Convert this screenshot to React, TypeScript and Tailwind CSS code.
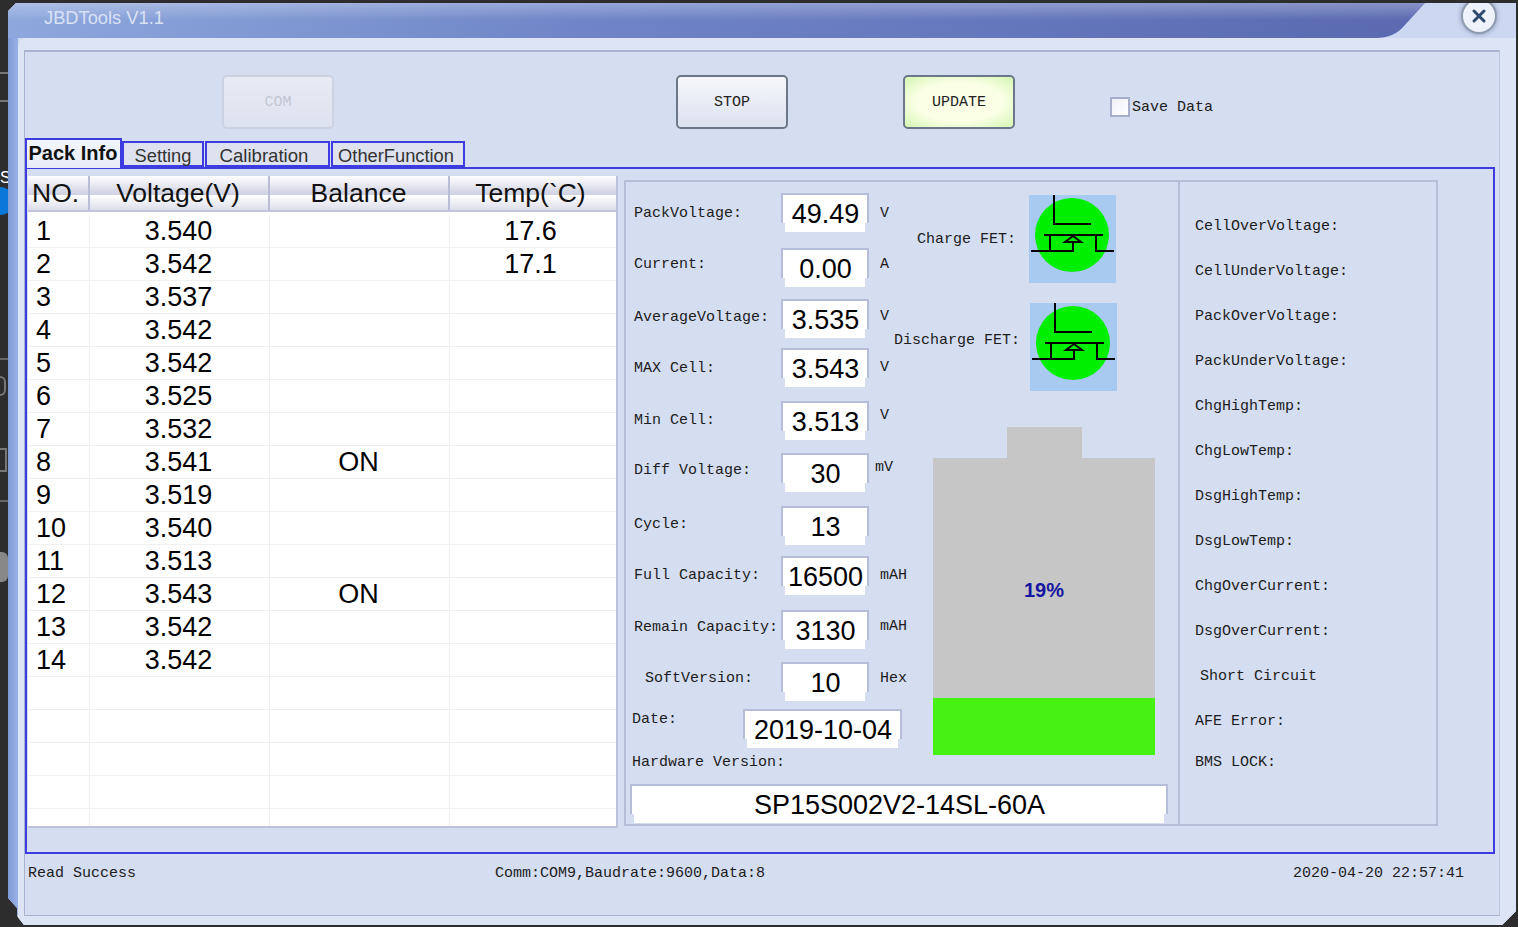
const cells = [
  { no: 1, v: "3.540", bal: "", temp: "17.6" },
  { no: 2, v: "3.542", bal: "", temp: "17.1" },
  { no: 3, v: "3.537", bal: "", temp: "" },
  { no: 4, v: "3.542", bal: "", temp: "" },
  { no: 5, v: "3.542", bal: "", temp: "" },
  { no: 6, v: "3.525", bal: "", temp: "" },
  { no: 7, v: "3.532", bal: "", temp: "" },
  { no: 8, v: "3.541", bal: "ON", temp: "" },
  { no: 9, v: "3.519", bal: "", temp: "" },
  { no: 10, v: "3.540", bal: "", temp: "" },
  { no: 11, v: "3.513", bal: "", temp: "" },
  { no: 12, v: "3.543", bal: "ON", temp: "" },
  { no: 13, v: "3.542", bal: "", temp: "" },
  { no: 14, v: "3.542", bal: "", temp: "" },
];

// the original dialog's controls sit on an uneven grid, so each row keeps its own offsets
const fields = [
  { label: "PackVoltage:", value: "49.49", unit: "V", row: "h-[55px]", labelCls: "pl-[8px] mt-[13px]", unitCls: "ml-[11px] mt-[13px]" },
  { label: "Current:", value: "0.00", unit: "A", row: "h-[51px]", labelCls: "pl-[8px] mt-[9px]", unitCls: "ml-[11px] mt-[9px]" },
  { label: "AverageVoltage:", value: "3.535", unit: "V", row: "h-[49px]", labelCls: "pl-[8px] mt-[11px]", unitCls: "ml-[11px] mt-[10px]" },
  { label: "MAX Cell:", value: "3.543", unit: "V", row: "h-[53px]", labelCls: "pl-[8px] mt-[13px]", unitCls: "ml-[11px] mt-[12px]" },
  { label: "Min Cell:", value: "3.513", unit: "V", row: "h-[52px]", labelCls: "pl-[8px] mt-[12px]", unitCls: "ml-[11px] mt-[7px]" },
  { label: "Diff Voltage:", value: "30", unit: "mV", row: "h-[53px]", labelCls: "pl-[8px] mt-[10px]", unitCls: "ml-[6px] mt-[7px]" },
  { label: "Cycle:", value: "13", unit: "", row: "h-[50px]", labelCls: "pl-[8px] mt-[11px]", unitCls: "" },
  { label: "Full Capacity:", value: "16500", unit: "mAH", row: "h-[54px]", labelCls: "pl-[8px] mt-[12px]", unitCls: "ml-[11px] mt-[12px]" },
  { label: "Remain Capacity:", value: "3130", unit: "mAH", row: "h-[52px]", labelCls: "pl-[8px] mt-[10px]", unitCls: "ml-[11px] mt-[9px]" },
  { label: "SoftVersion:", value: "10", unit: "Hex", row: "h-[47px]", labelCls: "pl-[19px] mt-[9px]", unitCls: "ml-[11px] mt-[9px]" },
];

const alarms = [
  "CellOverVoltage:",
  "CellUnderVoltage:",
  "PackOverVoltage:",
  "PackUnderVoltage:",
  "ChgHighTemp:",
  "ChgLowTemp:",
  "DsgHighTemp:",
  "DsgLowTemp:",
  "ChgOverCurrent:",
  "DsgOverCurrent:",
];

const mono = "font-['Liberation_Mono',monospace] text-[15px] leading-none text-[#1c1c1c] whitespace-pre";
const sans = "font-['Liberation_Sans',Arial,sans-serif] text-[27px] leading-none text-black";

function ValueBox({ value, className }: { value: string; className: string }) {
  return (
    <div className={`relative flex h-[39px] items-center justify-center ${className}`}>
      {/* frame is open at the bottom in the original skin */}
      <div className="absolute inset-x-0 top-0 h-[30px] border-x-2 border-t-2 border-[#b6bdd8] bg-white" />
      <div className="absolute inset-x-[4px] bottom-0 h-[12px] bg-white" />
      <span className={`relative mt-[4px] pl-[1px] ${sans}`}>{value}</span>
    </div>
  );
}

function FetIcon() {
  return (
    <svg width="87" height="88" viewBox="0 0 87 88" fill="none" className="shrink-0">
      <rect width="87" height="88" fill="#a8caf0" />
      <circle cx="43" cy="40" r="37" fill="#00ee00" />
      <g stroke="#000" strokeWidth="2">
        <path d="M25 0V29H62" />
        <path d="M15 40H74" />
        <path d="M21 40V56" />
        <path d="M2 56H44V47" />
        <path d="M44 41L36 47H52Z" />
        <path d="M67 40V56H85" />
      </g>
    </svg>
  );
}

function ActionButton({ label, className }: { label: string; className: string }) {
  return (
    <button className={`flex h-[54px] w-[112px] items-center justify-center rounded-[5px] border-2 font-['Liberation_Mono',monospace] text-[15px] leading-none ${className}`}>
      {label}
    </button>
  );
}

export default function App() {
  return (
    <div className="relative h-[927px] w-[1518px] overflow-hidden bg-[#2d2d2d] pl-[8px] pt-[3px]">
      {/* bits of the desktop behind the window */}
      <div className="absolute left-[-14px] top-[187px] h-[28px] w-[28px] rounded-full bg-[#0a78d8]" />
      <div className="absolute left-0 top-[170px] font-['Liberation_Sans',sans-serif] text-[16px] leading-none text-white">S</div>
      <div className="absolute left-0 top-[72px] h-[2px] w-[8px] bg-[#777]" />
      <div className="absolute left-0 top-[100px] h-[2px] w-[8px] bg-[#777]" />
      <div className="absolute left-0 top-[358px] h-[2px] w-[8px] bg-[#666]" />
      <div className="absolute left-0 top-[376px] h-[20px] w-[6px] rounded-r-full border-2 border-l-0 border-[#777]" />
      <div className="absolute left-0 top-[448px] h-[24px] w-[7px] border-2 border-l-0 border-[#777]" />
      <div className="absolute left-0 top-[500px] h-[2px] w-[8px] bg-[#666]" />
      <div className="absolute left-0 top-[552px] h-[30px] w-[8px] rounded-r-md bg-[#888]" />

      {/* window */}
      <div className="flex h-[922px] w-[1508px] flex-col bg-[#ccd7f1] [clip-path:polygon(0_8px,8px_0,100%_0,100%_calc(100%-14px),calc(100%-14px)_100%,16px_100%,9px_calc(100%-9px),9px_905px,0_895px)]">
        {/* title bar */}
        <div className="h-[35px] shrink-0">
          <div className="h-[35px] w-[1420px] bg-[linear-gradient(180deg,rgba(255,255,255,0.28),rgba(255,255,255,0)_50%),linear-gradient(90deg,#8ea8dd,#6f85c7_40%,#5a69b0)] pl-[36px] pt-[5px] font-['Liberation_Sans',Arial,sans-serif] text-[18.3px] leading-[20px] text-[#d9e1f5] [clip-path:path('M0_0H1417L1396_23Q1386_35_1368_35H0Z')]">
            JBDTools V1.1
          </div>
        </div>
        <div className="absolute left-[1461px] top-[-2px] flex h-[36px] w-[36px] items-center justify-center rounded-full border-2 border-[#8f9cb0] bg-[#eef2fa] shadow-[0_0_5px_rgba(90,100,140,0.55)]">
          <svg width="18" height="18" viewBox="0 0 18 18" fill="none" stroke="#2e4a6e" strokeWidth="3" strokeLinecap="round">
            <path d="M4 4L14 14M14 4L4 14" />
          </svg>
        </div>

        {/* body */}
        <div className="flex flex-1 bg-[linear-gradient(90deg,#7f9bd8,#99b1e4_10px,#ccd7f1_10px)]">
          <div className="w-[10px] shrink-0" />
          <div className="flex-1 rounded-tl-[8px] bg-[#dde4f5] pl-[6px] pt-[12px]">
            <div className="h-[866px] w-[1476px] border border-t-2 border-[#a8b2ce] border-r-[#bcc6de] bg-[#d5ddf1]">
              {/* toolbar */}
              <div className="flex h-[86px] items-start pl-[197px] pt-[23px]">
                <ActionButton label="COM" className="border-[#ccd2e2] bg-[linear-gradient(180deg,#e8ebf4,#dde2ef)] text-[#c2c6d2]" />
                <ActionButton label="STOP" className="ml-[342px] border-[#6c7889] bg-[linear-gradient(180deg,#f6f7fc,#dce1ef)] text-[#222]" />
                <ActionButton label="UPDATE" className="ml-[115px] border-[#6c7889] bg-[radial-gradient(ellipse_at_center,#fbffe6_55%,#d4f6b4)] text-[#222]" />
                <div className="ml-[95px] mt-[22px] flex items-center gap-[2px]">
                  <div className="h-[20px] w-[20px] border-2 border-[#a5aecb] bg-[linear-gradient(135deg,#eef1f9,#ffffff)]" />
                  <span className={mono}>Save Data</span>
                </div>
              </div>

              {/* tabs */}
              <div className="relative z-10 flex h-[30px] items-end">
                <div className="flex h-[30px] w-[97px] items-center justify-center border-2 border-b-0 border-[#3c3ce0] bg-[linear-gradient(180deg,#f3f6fc,#e6ebf7)] pb-[3px] pr-[1px] font-['Liberation_Sans',Arial,sans-serif] text-[20px] font-bold leading-none text-[#111]">
                  Pack Info
                </div>
                <div className="mb-[1px] flex h-[26px] w-[82px] items-center justify-center border-2 border-[#3c3ce0] bg-[#dde2ee] pt-[5px] font-['Liberation_Sans',Arial,sans-serif] text-[18.3px] leading-none text-[#333]">
                  Setting
                </div>
                <div className="mb-[1px] ml-[1px] flex h-[26px] w-[125px] items-center justify-center border-2 border-[#3c3ce0] bg-[#dde2ee] pr-[7px] pt-[5px] font-['Liberation_Sans',Arial,sans-serif] text-[18.6px] leading-none text-[#333]">
                  Calibration
                </div>
                <div className="mb-[1px] ml-[1px] flex h-[26px] w-[134px] items-center justify-center border-2 border-[#3c3ce0] bg-[#dde2ee] pr-[4px] pt-[5px] font-['Liberation_Sans',Arial,sans-serif] text-[18.3px] leading-none text-[#333]">
                  OtherFunction
                </div>
              </div>

              {/* tab pane */}
              <div className="-mt-[1px] flex h-[687px] w-[1470px] border-2 border-[#3c3ce0]">
                {/* cell table */}
                <div className="ml-[1px] mt-[7px] h-[652px] w-[590px] shrink-0 overflow-hidden border-b-2 border-r-2 border-[#bcc3da] bg-white">
                  <div className="grid h-[36px] grid-cols-[62px_180px_180px_166px] border-b-2 border-[#c0c4dc] bg-[linear-gradient(180deg,#ffffff,#cfd0e2_55%,#ffffff_57%,#dcdde9)] font-['Liberation_Sans',Arial,sans-serif] text-[26.5px] leading-none text-[#111]">
                    <div className="flex items-center border-r-2 border-[#b9bdd6] pl-[4px]">NO.</div>
                    <div className="flex items-center justify-center border-r-2 border-[#b9bdd6] pr-[2px]">Voltage(V)</div>
                    <div className="flex items-center justify-center border-r-2 border-[#b9bdd6] pr-[1px]">Balance</div>
                    <div className="flex items-center justify-center pr-[5px]">Temp(`C)</div>
                  </div>
                  <div className="pt-[3px]">
                    {cells.map((c) => (
                      <div key={c.no} className={`grid h-[33px] grid-cols-[62px_180px_180px_166px] border-b border-[#f0f0f2] ${sans}`}>
                        <div className="flex items-center border-r border-[#f0f0f2] pl-[8px]">{c.no}</div>
                        <div className="flex items-center justify-center border-r border-[#f0f0f2] pr-[2px]">{c.v}</div>
                        <div className="flex items-center justify-center border-r border-[#f0f0f2] pr-[2px]">{c.bal}</div>
                        <div className="flex items-center justify-center pr-[5px]">{c.temp}</div>
                      </div>
                    ))}
                    {[0, 1, 2, 3, 4].map((i) => (
                      <div key={i} className="grid h-[33px] grid-cols-[62px_180px_180px_166px] border-b border-[#f0f0f2]">
                        <div className="border-r border-[#f0f0f2]" />
                        <div className="border-r border-[#f0f0f2]" />
                        <div className="border-r border-[#f0f0f2]" />
                        <div />
                      </div>
                    ))}
                  </div>
                </div>

                {/* pack values */}
                <div className="ml-[6px] mt-[11px] h-[646px] w-[556px] shrink-0 border-2 border-[#b6bdd6]">
                  <div className="flex h-[602px]">
                    <div className="w-[268px] shrink-0 pt-[11px]">
                      {fields.map((f) => (
                        <div key={f.label} className={`flex items-start ${f.row}`}>
                          <div className={`w-[155px] shrink-0 ${mono} ${f.labelCls}`}>{f.label}</div>
                          <ValueBox value={f.value} className="w-[88px] shrink-0" />
                          {f.unit && <div className={`${mono} ${f.unitCls}`}>{f.unit}</div>}
                        </div>
                      ))}
                      <div className="flex h-[43px] items-start pl-[6px]">
                        <div className={`mt-[3px] w-[111px] shrink-0 ${mono}`}>Date:</div>
                        <ValueBox value="2019-10-04" className="w-[159px] shrink-0" />
                      </div>
                      <div className={`pl-[6px] pt-[3px] ${mono}`}>Hardware Version:</div>
                    </div>

                    <div className="flex-1 pt-[13px]">
                      <div className="flex h-[88px] items-center pl-[23px]">
                        <span className={`w-[112px] shrink-0 ${mono}`}>Charge FET:</span>
                        <FetIcon />
                      </div>
                      <div className="mt-[20px] flex h-[88px] items-center">
                        <span className={`mb-[14px] w-[136px] shrink-0 ${mono}`}>Discharge FET:</span>
                        <FetIcon />
                      </div>
                      <div className="ml-[39px] mt-[36px] flex w-[222px] flex-col items-center">
                        <div className="h-[31px] w-[75px] bg-[#c6c6c6]" />
                        <div className="flex h-[240px] w-full items-center justify-center bg-[#c6c6c6] pt-[24px] font-['Liberation_Sans',Arial,sans-serif] text-[20px] font-bold leading-none text-[#1616a0]">
                          19%
                        </div>
                        <div className="h-[57px] w-full bg-[#46f212]" />
                      </div>
                    </div>
                  </div>
                  <div className="pl-[4px]">
                    <ValueBox value="SP15S002V2-14SL-60A" className="w-[538px]" />
                  </div>
                </div>

                {/* alarms */}
                <div className="mt-[11px] h-[646px] w-[258px] shrink-0 border-y-2 border-r-2 border-[#b6bdd6] pl-[15px] pt-[22px]">
                  {alarms.map((a) => (
                    <div key={a} className={`flex h-[45px] items-center ${mono}`}>{a}</div>
                  ))}
                  <div className={`flex h-[45px] items-center pl-[5px] ${mono}`}>Short Circuit</div>
                  <div className={`flex h-[45px] items-center ${mono}`}>AFE Error:</div>
                  <div className={`-mt-[4px] flex h-[45px] items-center ${mono}`}>BMS LOCK:</div>
                </div>
              </div>

              {/* status bar */}
              <div className="relative flex h-[38px] items-center pl-[3px] pt-[1px]">
                <span className={`w-[467px] shrink-0 ${mono}`}>Read Success</span>
                <span className={`w-[798px] shrink-0 ${mono}`}>Comm:COM9,Baudrate:9600,Data:8</span>
                <span className={mono}>2020-04-20 22:57:41</span>
              </div>
            </div>
          </div>
        </div>
      </div>
    </div>
  );
}
